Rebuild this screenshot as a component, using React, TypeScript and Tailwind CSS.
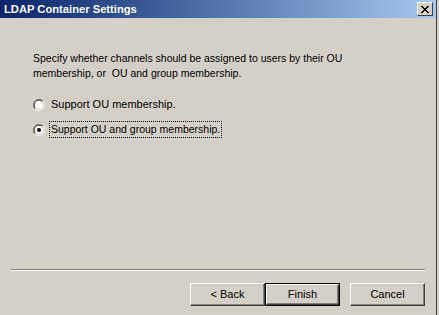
import React from "react";

const font = { fontFamily: '"Liberation Sans", Arial, sans-serif' };

function Radio({ checked }: { checked?: boolean }) {
  return (
    <svg width="12" height="12" viewBox="0 0 12 12" className="shrink-0">
      <path d="M10 2 A5.5 5.5 0 0 0 2 10" fill="none" stroke="#808080" />
      <path d="M9.5 2.5 A4.5 4.5 0 0 0 2.5 9.5" fill="none" stroke="#404040" />
      <path d="M2 10 A5.5 5.5 0 0 0 10 2" fill="none" stroke="#ffffff" />
      <path d="M2.5 9.5 A4.5 4.5 0 0 0 9.5 2.5" fill="none" stroke="#d4d0c8" />
      <circle cx="6" cy="6" r="4" fill="#ffffff" />
      {checked && <circle cx="6" cy="6" r="2" fill="#000000" />}
    </svg>
  );
}

function Button({ label, primary }: { label: string; primary?: boolean }) {
  return (
    <div
      className={`flex h-[23px] w-[75px] items-center justify-center text-[11px] text-black ${
        primary ? "border border-black" : ""
      }`}
    >
      <div className="flex h-full w-full items-center justify-center border border-t-white border-l-white border-r-[#404040] border-b-[#404040] bg-[#d4d0c8] shadow-[inset_-1px_-1px_0_#808080]">
        {label}
      </div>
    </div>
  );
}

export default function App() {
  return (
    <div className="flex h-[315px] w-[439px] bg-[#d4d0c8]" style={font}>
      <div className="flex w-[437px] flex-col border-r border-[#404040]">
        <div className="flex h-[18px] items-center justify-between bg-gradient-to-r from-[#0a246a] to-[#a6caf0] pl-[4px] pr-[3px]">
          <span className="text-[11.2px] font-bold text-white">LDAP Container Settings</span>
          <div className="flex h-[14px] w-[16px] items-center justify-center border border-t-white border-l-white border-r-[#404040] border-b-[#404040] bg-[#d4d0c8]">
            <svg width="8" height="7" viewBox="0 0 8 7">
              <path d="M0 0 L7 7 M1 0 L8 7 M7 0 L0 7 M8 0 L1 7" stroke="#000" strokeWidth="1" />
            </svg>
          </div>
        </div>
        <div className="flex flex-1 flex-col px-[11px]">
          <div className="flex flex-1 flex-col pl-[22px] pt-[33px] leading-[15px] text-black">
            <p className="text-[10.5px]">
              Specify whether channels should be assigned to users by their OU
              <br />
              membership, or&nbsp; OU and group membership.
            </p>
            <div className="mt-[16px] flex items-center gap-[5px] text-[11px]">
              <Radio />
              <span className="px-[1px]">Support OU membership.</span>
            </div>
            <div className="mt-[9px] flex items-center gap-[4px] text-[10.5px]">
              <Radio checked />
              <span className="border border-dotted border-black px-[1px]">Support OU and group membership.</span>
            </div>
          </div>
          <div className="h-[2px] border-t border-b border-t-[#808080] border-b-white" />
          <div className="flex h-[44px] items-start justify-end pt-[12px]">
            <Button label="< Back" />
            <Button label="Finish" primary />
            <div className="w-[10px]" />
            <Button label="Cancel" />
          </div>
        </div>
      </div>
    </div>
  );
}
